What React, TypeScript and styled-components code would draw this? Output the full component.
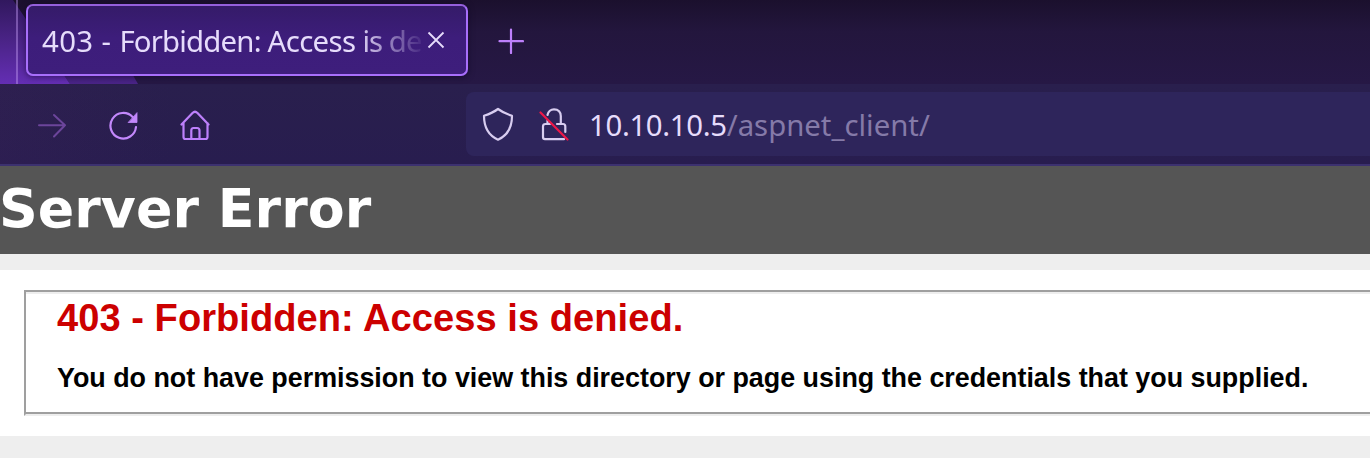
import React from "react";
import styled, { createGlobalStyle } from "styled-components";

const GlobalStyle = createGlobalStyle`
  html, body { margin: 0; padding: 0; background: #eeeeee; overflow: hidden; }
  * { box-sizing: border-box; }
`;

const Window = styled.div`
  width: 100%;
  height: 458px;
  overflow: hidden;
  display: flex;
  flex-direction: column;
`;

const TabStrip = styled.div`
  position: relative;
  flex: none;
  height: 84px;
  display: flex;
  align-items: flex-start;
  background: linear-gradient(180deg, #1b102d 0, #23163d 32px, #261845 84px);
`;

const ThemeArt = styled.svg`
  position: absolute;
  left: 0;
  top: 0;
`;

const Divider = styled.div`
  position: relative;
  width: 2px;
  height: 84px;
  margin: 0 8px 0 16px;
  background: rgba(190, 150, 240, 0.45);
`;

const Tab = styled.div`
  position: relative;
  width: 442px;
  height: 72px;
  margin-top: 4px;
  padding-left: 14px;
  display: flex;
  align-items: center;
  border: 2px solid #a86ffb;
  border-top-color: #9560dc;
  border-radius: 7px;
  background: linear-gradient(180deg, #351b69 0, #3d1d7b 32px, #3e1e7c 100%);
  box-shadow: 0 1px 6px rgba(10, 2, 30, 0.5);
`;

const TabTitle = styled.div`
  width: 382px;
  padding-top: 2px;
  white-space: pre;
  font: 400 29.33px/40px "Noto Sans", sans-serif;
  color: #e6dcfb;
  mask-image: linear-gradient(90deg, #000 314px, transparent 384px);
`;

const Run = styled.span<{ $track: number }>`
  letter-spacing: ${(p) => p.$track}px;
`;

const Glyph = styled.svg<{ $left?: number; $top?: number }>`
  flex: none;
  display: block;
  fill: none;
  margin-left: ${(p) => p.$left ?? 0}px;
  margin-top: ${(p) => p.$top ?? 0}px;
`;

const Toolbar = styled.div`
  flex: none;
  height: 82px;
  display: flex;
  align-items: center;
  border-bottom: 2px solid #3c316f;
  background:
    linear-gradient(90deg, rgba(64, 34, 92, 0.2), rgba(64, 34, 92, 0) 170px),
    linear-gradient(180deg, #291f4d, #281d4f);
`;

const NavButtons = styled.div`
  width: 466px;
  flex: none;
  display: flex;
  align-items: center;
  padding-left: 36px;
  padding-top: 2px;
  gap: 39px;
`;

const AddressBar = styled.div`
  flex: 1;
  height: 64px;
  display: flex;
  align-items: center;
  padding-left: 16px;
  border-radius: 8px 0 0 8px;
  background: #2e255b;
`;

const Address = styled.div`
  margin-left: 19px;
  padding-top: 2px;
  white-space: nowrap;
  font: 400 29.33px/40px "Noto Sans", sans-serif;
  color: #857aa8;
`;

const Host = styled.span`
  color: #e6dcfb;
  letter-spacing: -0.33px;
`;

const Header = styled.header`
  flex: none;
  height: 88px;
  background: #555555;
`;

const SiteTitle = styled.h1`
  margin: 0 0 0 -1px;
  font: 700 53.76px/86px "DejaVu Sans", Verdana, sans-serif;
  letter-spacing: 0.06px;
  color: #ffffff;
`;

const Content = styled.main`
  flex: none;
  height: 166px;
  margin-top: 16px;
  padding: 20px 0 0 24px;
  overflow: hidden;
  background: #ffffff;
`;

const Frame = styled.section`
  height: 126px;
  border: 2px solid #9f9f9f;
  border-right: 0;
  border-bottom-color: #eeeeee;
  box-shadow: inset 0 2px #eeeeee, inset 0 -2px #9f9f9f;
  padding: 4px 0 0 31px;
  font-family: "Liberation Sans", Arial, sans-serif;
  white-space: nowrap;
`;

const ErrorTitle = styled.h2`
  margin: 0;
  font-size: 38.08px;
  line-height: 44px;
  letter-spacing: 0.04px;
  color: #cc0000;
`;

const ErrorText = styled.h3`
  margin: 23px 0 0;
  font-size: 26.88px;
  line-height: 30px;
  letter-spacing: -0.01px;
  color: #000000;
`;

export default function App() {
  return (
    <Window>
      <GlobalStyle />
      <TabStrip>
        <ThemeArt width="200" height="84">
          <defs>
            <linearGradient id="bright" x1="0" y1="0" x2="0" y2="1">
              <stop offset="0" stopColor="#31185e" />
              <stop offset="0.5" stopColor="#4b2488" />
              <stop offset="1" stopColor="#642eb4" />
            </linearGradient>
            <linearGradient id="mid" x1="0" y1="0" x2="0" y2="1">
              <stop offset="0" stopColor="#1b102d" />
              <stop offset="0.35" stopColor="#231339" />
              <stop offset="1" stopColor="#4a2488" />
            </linearGradient>
          </defs>
          <path d="M13 0H90L138 84H70Z" fill="url(#mid)" />
          <path d="M0 0H13L70 84H0Z" fill="url(#bright)" />
        </ThemeArt>
        <Divider />
        <Tab>
          <TabTitle>
            <Run $track={0.4}>{"403 - "}</Run>
            <Run $track={-0.8}>{"Forbidden: "}</Run>
            <Run $track={-0.61}>{"Access "}</Run>
            <Run $track={-1}>{"is "}</Run>
            <Run $track={-0.7}>de</Run>
          </TabTitle>
          <Glyph width="18" height="18" $left={3} $top={-1} stroke="#e6dcfb" strokeWidth="1.8">
            <path d="M1.5 1.5L16.5 16.5M16.5 1.5L1.5 16.5" />
          </Glyph>
        </Tab>
        <Glyph width="26" height="26" $left={30} $top={28} stroke="#bd80fb" strokeWidth="2.2" strokeLinecap="round">
          <path d="M13 1.5V25M1.5 13.2H25" />
        </Glyph>
      </TabStrip>
      <Toolbar>
        <NavButtons>
          <Glyph width="32" height="32" stroke="#6c459b" strokeWidth="2" strokeLinecap="round" strokeLinejoin="round">
            <path d="M3 16.3H29M18 6L29 16.3L18 27.5" />
          </Glyph>
          <Glyph width="32" height="32" stroke="#c388fc" strokeWidth="2.2" strokeLinecap="round">
            <path d="M29 18A12.8 12.8 0 1 1 25.6 8" />
            <path d="M30 4V13.5H21.5Z" fill="#c388fc" stroke="#c388fc" strokeWidth="0.8" />
          </Glyph>
          <Glyph width="32" height="32" $left={1} stroke="#bd80fb" strokeWidth="2.2" strokeLinecap="round" strokeLinejoin="round">
            <path d="M2.5 15.5L13.5 4Q16 1.5 18.5 4L29.5 15.5M4.5 14V28Q4.5 30 6.5 30H26.5Q28.5 30 28.5 28V14M12.3 30V21.5Q12.3 19 14.5 19H18Q20.5 19 20.5 21.5V30" />
          </Glyph>
        </NavButtons>
        <AddressBar>
          <Glyph width="32" height="34" stroke="#d8cdf0" strokeWidth="2.2" strokeLinejoin="round">
            <path d="M16 2C12 5 7.5 7 2 8.8C2 20 5.5 28 16 32.7C26.5 28 30 20 30 8.8C24.5 7 20 5 16 2Z" />
          </Glyph>
          <Glyph width="32" height="34" $left={24} stroke="#d8cdf0" strokeWidth="2.2" strokeLinecap="round">
            <path d="M9.5 8C10 4.5 13 2.3 16 2.3C20.5 2.3 22.8 5.5 22.8 9V17H25Q27.3 17 27.3 19.5V25M9.5 13.5V17H7.5Q5 17 5 19.5V30Q5 32.2 7 32.2H26M9.5 17H12M19 17H23" />
            <path d="M2.5 5.5L29.5 32.5" stroke="#ee1748" />
          </Glyph>
          <Address>
            <Host>10.10.10.5</Host>/aspnet_client/
          </Address>
        </AddressBar>
      </Toolbar>
      <Header>
        <SiteTitle>Server Error</SiteTitle>
      </Header>
      <Content>
        <Frame>
          <ErrorTitle>403 - Forbidden: Access is denied.</ErrorTitle>
          <ErrorText>
            You do not have permission to view this directory or page using the credentials that you supplied.
          </ErrorText>
        </Frame>
      </Content>
    </Window>
  );
}
